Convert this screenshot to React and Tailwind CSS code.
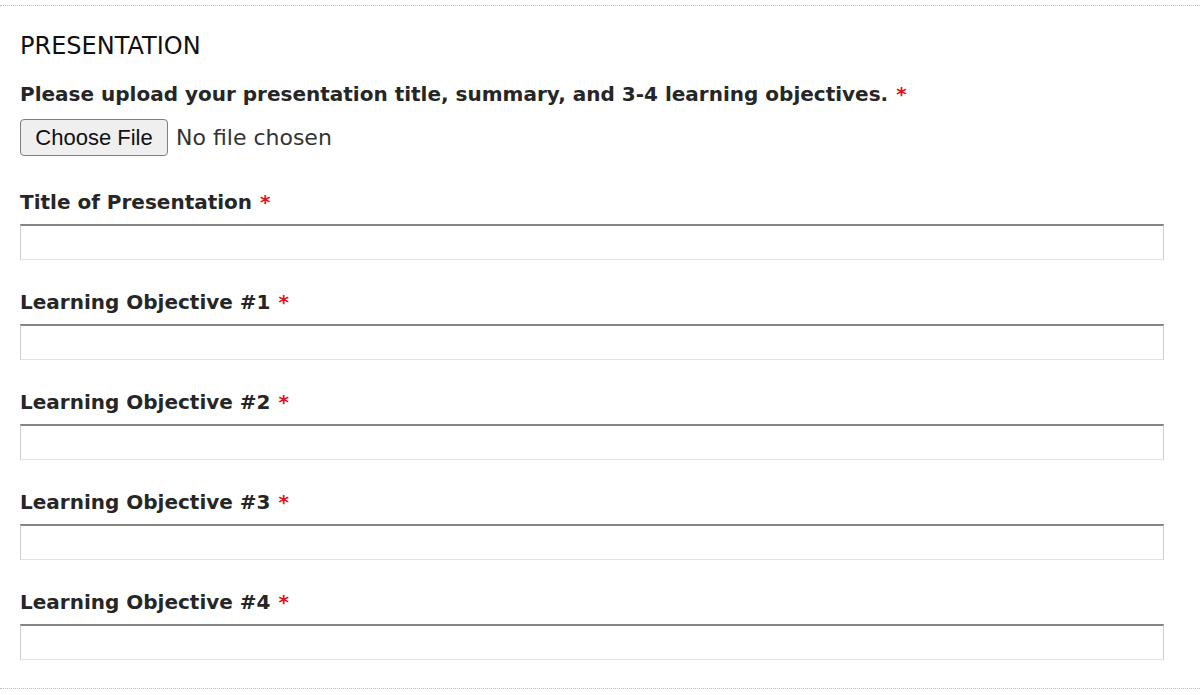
const fields = [
  "Title of Presentation",
  "Learning Objective #1",
  "Learning Objective #2",
  "Learning Objective #3",
  "Learning Objective #4",
];

function Required() {
  return <span className="ml-2 text-[#e0141e]">*</span>;
}

function TextField({ label }) {
  return (
    <div className="flex flex-col">
      <label className="text-[20px] font-bold leading-[24px] text-[#262626]">
        {label}
        <Required />
      </label>
      <input
        type="text"
        className="mt-[10px] h-[36px] w-[1144px] border border-t-2 border-[#cdcdcd] border-b-[#e2e2e2] border-t-[#858585] bg-white outline-none"
      />
    </div>
  );
}

export default function App() {
  return (
    <div className="min-h-[695px] bg-white pt-[5px] font-['DejaVu_Sans',sans-serif]">
      <div className="border-y border-dotted border-[#bdbdbd] px-[20px] pb-[28px] pt-[27px]">
        <h2 className="text-[24px] leading-[26px] text-[#111]">PRESENTATION</h2>
        <p className="mt-[23px] text-[20px] font-bold leading-[24px] text-[#262626]">
          Please upload your presentation title, summary, and 3-4 learning objectives.
          <Required />
        </p>
        <div className="mt-[13px] flex items-center">
          <button
            type="button"
            className="h-[37px] w-[148px] rounded-[4px] border border-[#7f7f7f] bg-[#efefef] font-['Liberation_Sans',sans-serif] text-[22px] text-[#111]"
          >
            Choose File
          </button>
          <span className="ml-[8px] text-[22px] text-[#333]">No file chosen</span>
        </div>
        <div className="mt-[34px] flex flex-col gap-[30px]">
          {fields.map((f) => (
            <TextField key={f} label={f} />
          ))}
        </div>
      </div>
    </div>
  );
}
